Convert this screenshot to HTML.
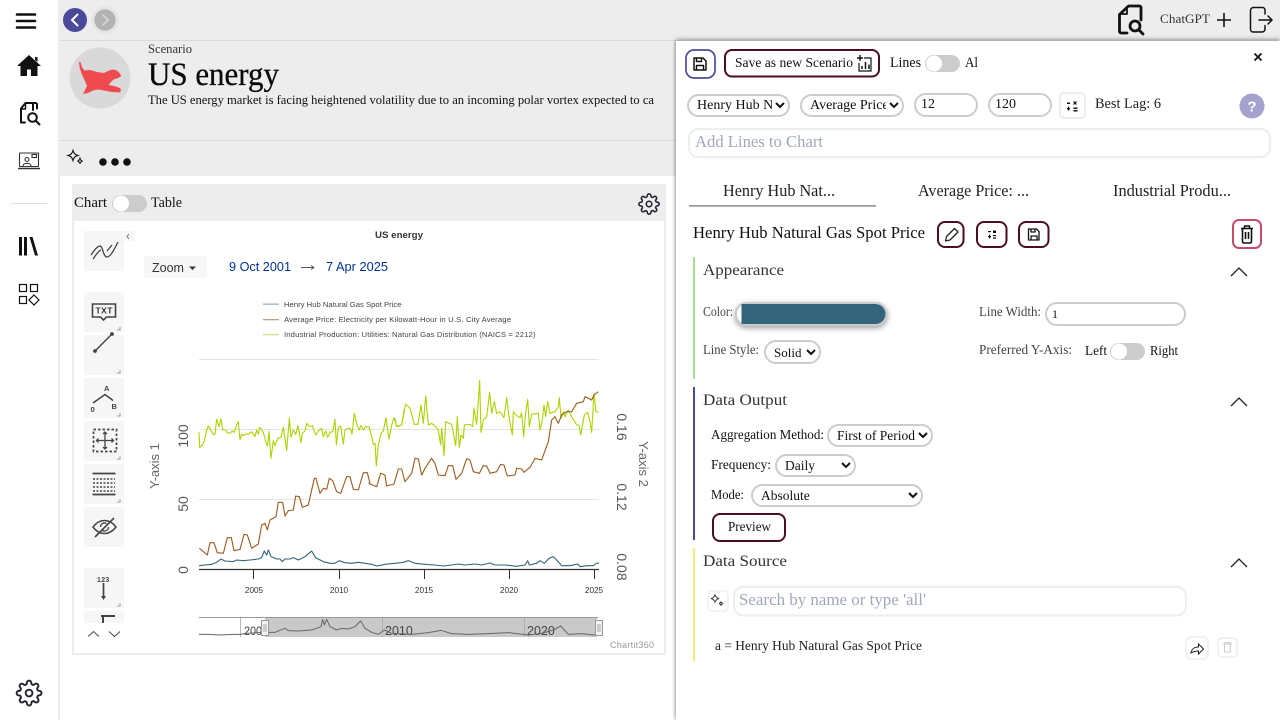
<!DOCTYPE html>
<html><head><meta charset="utf-8"><title>US energy</title>
<style>
html,body{margin:0;padding:0;width:1280px;height:720px;overflow:hidden;background:#fff;font-family:"Liberation Serif",serif;color:#111}
.a{position:absolute;box-sizing:border-box}
svg.main{position:absolute;left:0;top:0;z-index:2}
svg text{font-family:"Liberation Serif",serif;fill:#111}
svg text.s{font-family:"Liberation Sans",sans-serif}
.c{z-index:3;font-family:"Liberation Serif",serif;font-size:14px;color:#111;background:#fff;border:2px solid #ccc;border-radius:12px;padding:0 0 0 4px;outline:none;margin:0}
.tb{z-index:1;background:#f6f6f6}
.pl{fill:none;stroke-linejoin:round;vector-effect:non-scaling-stroke}
</style></head><body>
<div class="a" style="left:58px;top:0;width:1222px;height:40px;background:#ededed"></div>
<div class="a" style="left:58px;top:40px;width:622px;height:680px;background:#ededed"></div>
<div class="a" style="left:60px;top:40px;width:616px;height:1px;background:#d8d8d8"></div>
<div class="a" style="left:60px;top:140px;width:616px;height:1px;background:#d8d8d8"></div>
<div class="a" style="left:60px;top:176px;width:620px;height:544px;background:#fff"></div>
<div class="a" style="left:72px;top:184px;width:594px;height:471px;background:#ededed"></div>
<div class="a" style="left:74px;top:221px;width:590px;height:432px;background:#fff"></div>
<div class="a" style="left:676px;top:41px;width:604px;height:679px;background:#fff;box-shadow:0 -2px 4px rgba(0,0,0,.3),-1px 0 3px rgba(0,0,0,.22)"></div>

<div class="a tb" style="left:84px;top:231px;width:40px;height:40px"></div>
<div class="a tb" style="left:124px;top:231px;width:10px;height:10px"></div>
<div class="a tb" style="left:84px;top:292px;width:40px;height:40px"></div>
<div class="a tb" style="left:84px;top:335px;width:40px;height:40px"></div>
<div class="a tb" style="left:84px;top:378px;width:40px;height:40px"></div>
<div class="a tb" style="left:84px;top:421px;width:40px;height:40px"></div>
<div class="a tb" style="left:84px;top:464px;width:40px;height:40px"></div>
<div class="a tb" style="left:84px;top:507px;width:40px;height:40px"></div>
<div class="a tb" style="left:84px;top:568px;width:40px;height:40px"></div>
<div class="a tb" style="left:84px;top:611px;width:40px;height:12px"></div>
<div class="a tb" style="left:144px;top:256px;width:63px;height:22px;background:#f7f7f7"></div>

<svg class="main" width="1280" height="720" viewBox="0 0 1280 720">
<!-- Sidebar -->
<g fill="none" stroke="#111" stroke-width="2.600" stroke-linecap="round"><path d="M17 14.500h18M17 21h18M17 27.500h18"/></g>
<path d="M29 55 L17 66h3.500v10h6.500v-6.500h4V76h6.500V66H41z" fill="#111"/><path d="M35 57h2.500v5l-2.500-2z" fill="#111"/>
<g fill="none" stroke="#111" stroke-width="2" stroke-linecap="round" stroke-linejoin="round"><path d="M33 110v-7h-7.500l-4.500 5.500v14h4"/><path d="M25.500 103v6h-4.500" stroke-width="1.400"/><path d="M33 103h2.500a1.500 1.500 0 0 1 1.500 1.500v4"/><circle cx="32.500" cy="117.500" r="4.300"/><path d="M36 121l3.500 3.500"/></g>
<g fill="none" stroke="#333" stroke-width="1.100"><rect x="19.500" y="153" width="19" height="13.500" rx=".5"/><path d="M18 168.500h22" stroke-width="1.500"/><circle cx="27" cy="159.500" r="2"/><path d="M23 166c0-3.500 8-3.500 8 0"/><rect x="32" y="154.500" width="4.500" height="3"/></g>
<rect x="11" y="203" width="36" height="1" fill="#e0e0e0"/>
<g fill="#111"><rect x="19" y="237" width="3" height="18.500"/><rect x="24" y="237" width="3" height="18.500"/><path d="M29.500 237h3l5.500 18.500h-3z"/></g>
<g fill="none" stroke="#111" stroke-width="1.200"><rect x="19.500" y="284.500" width="7" height="7"/><rect x="30.500" y="284.500" width="7" height="7"/><rect x="19.500" y="296.500" width="7" height="7"/><path d="M34 295l5 5-5 5-5-5z"/></g>
<g transform="translate(15.500 679.500) scale(1.130)" fill="none" stroke="#223" stroke-width="1.700"><circle cx="12" cy="12" r="3"/><path d="M19.400 15a1.650 1.650 0 0 0 .33 1.820l.06.06a2 2 0 0 1 0 2.830 2 2 0 0 1-2.830 0l-.06-.06a1.650 1.650 0 0 0-1.820-.33 1.650 1.650 0 0 0-1 1.510V21a2 2 0 0 1-2 2 2 2 0 0 1-2-2v-.09A1.650 1.650 0 0 0 9 19.400a1.650 1.650 0 0 0-1.820.33l-.06.06a2 2 0 0 1-2.830 0 2 2 0 0 1 0-2.830l.06-.06a1.650 1.650 0 0 0 .33-1.820 1.650 1.650 0 0 0-1.510-1H3a2 2 0 0 1-2-2 2 2 0 0 1 2-2h.09A1.650 1.650 0 0 0 4.600 9a1.650 1.650 0 0 0-.33-1.820l-.06-.06a2 2 0 0 1 0-2.830 2 2 0 0 1 2.830 0l.06.06a1.650 1.650 0 0 0 1.820.33H9a1.650 1.650 0 0 0 1-1.510V3a2 2 0 0 1 2-2 2 2 0 0 1 2 2v.09a1.650 1.650 0 0 0 1 1.510 1.650 1.650 0 0 0 1.820-.33l.06-.06a2 2 0 0 1 2.830 0 2 2 0 0 1 0 2.830l-.06.06a1.650 1.650 0 0 0-.33 1.820V9a1.650 1.650 0 0 0 1.510 1H21a2 2 0 0 1 2 2 2 2 0 0 1-2 2h-.09a1.650 1.650 0 0 0-1.510 1z"/></g>

<!-- Top nav -->
<circle cx="75" cy="20" r="12" fill="#4a4a9a"/><path d="M77.500 14.500L72 20l5.500 5.500" fill="none" stroke="#fff" stroke-width="2" stroke-linecap="round"/>
<circle cx="105" cy="20" r="14" fill="#e6e6e6"/><circle cx="105" cy="20" r="10.700" fill="#b3b3b3"/><path d="M103 15l5 5-5 5" fill="none" stroke="#d5d5d5" stroke-width="1.600" stroke-linecap="round"/>
<g fill="none" stroke="#111" stroke-width="2.800" stroke-linecap="round" stroke-linejoin="round"><path d="M1141 20v-12.500a1.500 1.500 0 0 0-1.500-1.500h-11l-9 8.500v17a1.500 1.500 0 0 0 1.500 1.500h6"/><path d="M1127 7v7h-7" stroke-width="1.800"/><circle cx="1135" cy="26" r="5"/><path d="M1139 30l4 4"/></g>
<path d="M1224 13v14M1217 20h14" stroke="#111" stroke-width="1.600" fill="none"/>
<g fill="none" stroke="#111" stroke-width="1.500" stroke-linecap="round" stroke-linejoin="round"><path d="M1265 14V10a2.500 2.500 0 0 0-2.500-2.500h-9a3 3 0 0 0-3 3v19a2.500 2.500 0 0 0 2.500 2.500h9a3 3 0 0 0 3-3v-3.500"/><path d="M1259 20h13M1268 16l4 4-4 4"/></g>
<text x="1160" y="23" font-size="13" textLength="50" lengthAdjust="spacingAndGlyphs" style="fill:#333">ChatGPT</text>

<!-- Header -->
<circle cx="100" cy="78" r="30.500" fill="#d9d9d9"/>
<path d="M79 62L80.500 62L82 67L84.500 70.500L90 70L97 72L104 73L108 71L112 69.500L116 70L119 72.500L121.500 76L118 78L113.500 79.500L111 82L108.500 85L114 86L120 88L121 90L120 92.500L112 92L104 90.500L98 89.500L93 90.500L88 93L83 94L85 90L87 86L85 81L83 77L81 72L79.500 67Z" fill="#ef4a4f"/>
<text x="148" y="53" font-size="13" textLength="44" lengthAdjust="spacingAndGlyphs" style="fill:#333">Scenario</text>
<text x="148" y="85" font-size="33" textLength="131" lengthAdjust="spacingAndGlyphs" style="fill:#0a0a0a;stroke:#0a0a0a;stroke-width:.3">US energy</text>
<text x="148" y="104" font-size="12.500" textLength="506" lengthAdjust="spacingAndGlyphs">The US energy market is facing heightened volatility due to an incoming polar vortex expected to ca</text>
<g fill="none" stroke="#111" stroke-width="1.100"><path d="M73 150.500c.8 3 2 4.200 5 5-3 .8-4.200 2-5 5-.8-3-2-4.200-5-5 3-.8 4.200-2 5-5z"/><path d="M80 158.500c.4 1.500 1 2.200 2.600 2.600-1.600.4-2.200 1-2.600 2.600-.4-1.600-1-2.200-2.600-2.600 1.600-.4 2.200-1 2.600-2.600z"/></g>
<circle cx="103" cy="162" r="3.800" fill="#111"/><circle cx="115" cy="162" r="3.800" fill="#111"/><circle cx="127" cy="162" r="3.800" fill="#111"/>

<!-- Chart head -->
<text x="74" y="207" font-size="14.500" textLength="33" lengthAdjust="spacingAndGlyphs">Chart</text>
<rect x="112" y="195" width="35" height="17" rx="8.500" fill="#ccc"/><circle cx="121" cy="203.500" r="8" fill="#fff"/>
<text x="151" y="207" font-size="14.500" textLength="31" lengthAdjust="spacingAndGlyphs">Table</text>
<g transform="translate(638 193) scale(.92)" fill="none" stroke="#223" stroke-width="1.700"><circle cx="12" cy="12" r="3"/><path d="M19.400 15a1.650 1.650 0 0 0 .33 1.820l.06.06a2 2 0 0 1 0 2.830 2 2 0 0 1-2.830 0l-.06-.06a1.650 1.650 0 0 0-1.820-.33 1.650 1.650 0 0 0-1 1.510V21a2 2 0 0 1-2 2 2 2 0 0 1-2-2v-.09A1.650 1.650 0 0 0 9 19.400a1.650 1.650 0 0 0-1.820.33l-.06.06a2 2 0 0 1-2.830 0 2 2 0 0 1 0-2.830l.06-.06a1.650 1.650 0 0 0 .33-1.820 1.650 1.650 0 0 0-1.510-1H3a2 2 0 0 1-2-2 2 2 0 0 1 2-2h.09A1.650 1.650 0 0 0 4.600 9a1.650 1.650 0 0 0-.33-1.820l-.06-.06a2 2 0 0 1 0-2.830 2 2 0 0 1 2.830 0l.06.06a1.650 1.650 0 0 0 1.820.33H9a1.650 1.650 0 0 0 1-1.510V3a2 2 0 0 1 2-2 2 2 0 0 1 2 2v.09a1.650 1.650 0 0 0 1 1.510 1.650 1.650 0 0 0 1.820-.33l.06-.06a2 2 0 0 1 2.830 0 2 2 0 0 1 0 2.830l-.06.06a1.650 1.650 0 0 0-.33 1.820V9a1.650 1.650 0 0 0 1.510 1H21a2 2 0 0 1 2 2 2 2 0 0 1-2 2h-.09a1.650 1.650 0 0 0-1.510 1z"/></g>

<!-- Tool icons -->
<path d="M129 234l-2 2.500 2 2.500" fill="none" stroke="#777" stroke-width="1"/>
<g fill="none" stroke="#444" stroke-width="1.300">
<path d="M91 255c3-4 6-9 9-9 3 0 3 11 7 11 3 0 6-5 11-15M93 259c3-4 5-8 8-9M107 251l5-6"/>
<path d="M92.500 304h23v13h-9l-3 3-3-3h-8z" stroke-width="1.600"/>
<path d="M95 351l17-17" stroke-width="1.400"/>
<path d="M93 403l12-8.500 8 6" stroke-width="1.500"/>
<rect x="93.500" y="429.500" width="23" height="22" stroke-dasharray="2.500 2" stroke-width="1.700"/><path d="M105 432v17M96.500 440.500h17M103 434l2-2 2 2M103 447l2 2 2-2M98.500 438.500l-2 2 2 2M111.500 438.500l2 2-2 2"/>
<path d="M92.500 473.500h23M92.500 494.500h23" stroke-width="1.700"/><path d="M93 479h22M93 483h22M93 487h22M93 491h22" stroke-dasharray="2 1.500" stroke-width="1.400"/>
<path d="M93 527c3-4 7-6.500 11.500-6.500s8.500 2.500 11.500 6.500c-3 4-7 6.500-11.500 6.500S96 531 93 527z" stroke-width="1.500"/><path d="M100.500 527a4 4 0 0 1 6-3.500M108.500 527a4 4 0 0 1-6 3.500"/><path d="M95 537l19-19" stroke-width="1.600"/>
<path d="M103.500 583v14" stroke-width="1.700"/>
<path d="M101 616h14M103 616v7" stroke-width="2"/>
</g>
<circle cx="95" cy="351" r="1.900" fill="#444"/><circle cx="112" cy="334" r="1.900" fill="#444"/>
<path d="M101 596h5l-2.500 4z" fill="#444"/>
<text class="s" x="97" y="582" font-size="7" font-weight="bold" style="fill:#444;letter-spacing:.3px">123</text>
<text class="s" x="95.500" y="313.500" font-size="8.500" font-weight="bold" textLength="17" lengthAdjust="spacing" style="fill:#333">TXT</text>
<text class="s" x="104" y="391" font-size="7.500" font-weight="bold" style="fill:#444">A</text><text class="s" x="90.500" y="412" font-size="7.500" font-weight="bold" style="fill:#444">0</text><text class="s" x="111.500" y="409" font-size="7.500" font-weight="bold" style="fill:#444">B</text>
<g fill="none" stroke="#888" stroke-width=".8"><path d="M117 330h3v-3M117 373h3v-3M117 416h3v-3M117 459h3v-3M117 502h3v-3M117 606h3v-3"/></g>
<path d="M88 636.500l5.500-5 5.500 5M109 631.500l5.500 5 5.500-5" fill="none" stroke="#444" stroke-width="1"/>

<!-- Chart text -->
<text class="s" x="375" y="238" font-size="9.500" font-weight="bold" textLength="48" lengthAdjust="spacingAndGlyphs" style="fill:#333">US energy</text>
<text class="s" x="152" y="272" font-size="12.500" style="fill:#333">Zoom</text><path d="M189 266.500h7l-3.500 3.500z" fill="#333"/>
<text class="s" x="229" y="271" font-size="12.500" textLength="62" lengthAdjust="spacingAndGlyphs" style="fill:#003399">9 Oct 2001</text>
<text class="s" x="326" y="271" font-size="12.500" textLength="62" lengthAdjust="spacingAndGlyphs" style="fill:#003399">7 Apr 2025</text>
<path d="M301 267.500h13M311 265.500l3 2-3 2" fill="none" stroke="#555" stroke-width=".9"/>
<rect x="263" y="303.500" width="16" height="1.300" fill="#9ab0bc"/><rect x="263" y="319" width="16" height="1.300" fill="#c2a17f"/><rect x="263" y="334" width="16" height="1.300" fill="#cfe58c"/>
<g font-size="7.700"><text class="s" x="284" y="307" style="fill:#444">Henry Hub Natural Gas Spot Price</text>
<text class="s" x="284" y="322" textLength="227" lengthAdjust="spacing" style="fill:#444">Average Price: Electricity per Kilowatt-Hour in U.S. City Average</text>
<text class="s" x="284" y="337" textLength="251.500" lengthAdjust="spacing" style="fill:#444">Industrial Production: Utilities: Natural Gas Distribution (NAICS = 2212)</text></g>

<path d="M199 359.500h400M199 429.500h400M199 499.500h400" stroke="#e3e3e3" stroke-width="1" fill="none"/>
<path d="M199 569.500h400" stroke="#333" stroke-width="1.300"/>
<path d="M253.500 570v9M339.500 570v9M424.500 570v9M509.500 570v9M594.500 570v9" stroke="#333" stroke-width="1"/>
<g font-size="8.200" text-anchor="middle"><text class="s" x="254" y="593" style="fill:#333">2005</text><text class="s" x="339" y="593" style="fill:#333">2010</text><text class="s" x="424" y="593" style="fill:#333">2015</text><text class="s" x="509" y="593" style="fill:#333">2020</text><text class="s" x="594" y="593" style="fill:#333">2025</text></g>
<g font-size="14" text-anchor="middle" fill="#555">
<text class="s" transform="translate(188 570) rotate(-90)" style="fill:#555">0</text>
<text class="s" transform="translate(188 504) rotate(-90)" style="fill:#555">50</text>
<text class="s" transform="translate(188 436) rotate(-90)" style="fill:#555">100</text>
<text class="s" transform="translate(159 466) rotate(-90)" font-size="13" style="fill:#666">Y-axis 1</text>
<text class="s" transform="translate(617 427) rotate(90)" style="fill:#555">0.16</text>
<text class="s" transform="translate(617 497) rotate(90)" style="fill:#555">0.12</text>
<text class="s" transform="translate(617 567) rotate(90)" style="fill:#555">0.08</text>
<text class="s" transform="translate(639 464) rotate(90)" font-size="13" style="fill:#666">Y-axis 2</text>
</g>

<!-- Series -->
<g transform="translate(195 375) scale(.33333)"><polyline class="pl" stroke="#aad400" stroke-width="1.100" points="12,172 14,218 22,210 28,198 35,165 40,153 47,165 55,178 60,178 65,132 72,155 78,132 83,165 92,165 97,173 105,175 112,168 118,172 125,150 130,140 135,195 140,178 145,182 152,177 160,178 170,170 180,185 185,165 190,178 194,157 205,172 215,210 218,212 222,170 228,250 235,197 240,212 248,190 258,187 265,157 275,227 283,130 288,187 295,165 302,178 309,152 318,203 322,175 330,168 335,145 345,155 352,152 362,180 370,168 380,160 385,185 392,168 398,187 405,172 413,170 420,133 424,210 430,158 437,153 445,207 450,165 460,160 466,160 471,178 478,115 485,147 492,165 498,152 505,165 512,155 522,155 530,185 535,208 540,205 544,272 550,210 558,175 565,168 573,128 582,192 590,150 597,128 605,153 620,150 628,100"/></g>
<g transform="translate(395 375) scale(.33333)"><polyline class="pl" stroke="#aad400" stroke-width="1.100" points="0,130 5,155 20,150 32,87 45,100 58,148 68,148 72,130 78,90 85,145 92,62 100,150 110,145 122,155 130,165 137,210 140,160 147,242 152,140 170,148 182,212 187,125 193,218 198,180 205,190 208,150 225,148 233,155 237,100 245,148 254,17 258,172 265,135 275,125 284,52 290,115 298,80 305,115 315,110 327,128 335,68 342,125 347,155 352,180 355,110 365,122 375,128 380,113 386,185 392,113 398,73 403,155 410,118 430,115 435,165 442,135 447,90 452,125 458,80 465,115 480,110 490,95 493,68 498,130 505,110 510,125 520,105 530,125 545,150 552,150 557,180 563,148 568,120 578,112 585,140 590,172 597,55 603,110 610,112"/></g>
<g transform="translate(70 420) scale(.33333)"><polyline class="pl" stroke="#9c5a1c" stroke-width="1.100" points="388,385 412,405 420,368 432,368 442,398 460,400 472,353 484,353 492,392 510,388 522,343 532,345 545,385 565,372 575,315 585,310 592,330 600,300 618,290 625,247 638,247 645,288 655,272 670,270 677,228 688,230 697,262 715,255 733,175 738,175 750,220 760,205 770,208 778,175 788,182 800,215 812,220 830,170 840,170 850,208 865,210 880,158 892,158 900,190"/></g>
<g transform="translate(370 360) scale(.33333)"><polyline class="pl" stroke="#9c5a1c" stroke-width="1.100" points="-4,368 0,372 20,380 32,340 45,345 50,378 72,372 85,327 95,327 105,365 125,340 135,295 145,297 155,345 165,325 185,295 195,310 205,345 225,347 235,317 248,317 258,358 275,340 290,296 300,300 310,335 328,340 340,317 350,318 360,340 380,335 392,313 402,315 412,348 435,345 440,325 455,327 462,337 480,322 495,295 515,300 535,245 545,180 555,170 565,190 575,165 590,155 605,155 620,130 640,125 645,110 665,120 672,105 685,95"/></g>
<g transform="translate(195 545) scale(.33333)"><polyline class="pl" stroke="#34647c" stroke-width="1.100" points="12,62 30,60 50,58 65,52 78,42 90,48 115,50 125,45 145,47 165,45 190,42 200,38 208,18 215,30 220,15 228,35 245,42 255,42 262,50 270,42 285,42 295,38 310,45 330,35 350,18 362,38 385,50 405,55 420,55 432,47 450,53 470,55 490,52 510,55 530,58 545,63 570,58 600,55 625,52 640,47 660,55 690,58 720,60 745,63 770,60 790,57 810,60 840,57 860,60 885,54 900,60 930,60 965,64 990,60 998,47 1003,60 1025,55 1035,47 1048,55 1062,40 1075,35 1085,45 1100,62 1125,62 1148,57 1155,65 1175,62 1195,62 1205,54 1212,55"/></g>

<!-- Navigator -->
<rect x="265" y="617" width="332" height="20" fill="#c9c9c9"/>
<path d="M199 617.500h399" stroke="#999" stroke-width="1"/>
<path d="M240.500 618v19M382.500 618v19M524.500 618v19" stroke="#aaa" stroke-width=".8"/>
<text class="s" x="244" y="635" font-size="12" textLength="18" lengthAdjust="spacingAndGlyphs" style="fill:#444">200</text>
<text class="s" x="385" y="635" font-size="12.500" style="fill:#444">2010</text>
<text class="s" x="527" y="635" font-size="12.500" style="fill:#444">2020</text>
<g transform="translate(195 545) scale(.33333)"><polyline class="pl" stroke="#666" stroke-width="1" points="12,268 40,268 75,270 115,268 137,268 150,265 210,262 240,262 270,250 280,257 310,258 350,255 378,245 383,223 388,240 395,223 405,245 425,255 440,250 460,252 480,245 497,228 510,250 530,262 550,268 568,255 590,265 650,268 700,263 738,256 770,266 820,268 880,266 940,263 1000,270 1040,265 1075,255 1097,243 1120,268 1160,266 1195,270 1210,265"/></g>
<rect x="261.500" y="620.500" width="7" height="15" fill="#f2f2f2" stroke="#999"/><path d="M264 624v8M266 624v8" stroke="#888" stroke-width=".7"/>
<rect x="595.500" y="620.500" width="7" height="15" fill="#f2f2f2" stroke="#999"/><path d="M598 624v8M600 624v8" stroke="#888" stroke-width=".7"/>
<text class="s" x="610" y="648" font-size="9" textLength="44" lengthAdjust="spacing" style="fill:#999">Chartit360</text>

<!-- Panel top -->
<rect x="686" y="50" width="29" height="28" rx="8" fill="#fff" stroke="#4a4a9a" stroke-width="1.700"/>
<g fill="none" stroke="#111" stroke-width="1.500" stroke-linejoin="round"><path d="M694 58h9l3 3v9h-12z"/><path d="M696.500 58v3.500h5V58M696.500 70v-4.500h7V70"/></g>
<rect x="725" y="50" width="154" height="26.500" rx="7" fill="#fff" stroke="#4a0d25" stroke-width="2"/>
<text x="735" y="67" font-size="13.500" textLength="118" lengthAdjust="spacingAndGlyphs">Save as new Scenario</text>
<g fill="none" stroke="#111" stroke-width="1.200"><path d="M864 58h7v13h-12v-8"/><path d="M862 66v3M865.500 62v7M869 64.500v4.500" stroke-width="1.500"/><path d="M860 55v6M857 58h6" stroke-width="1.400"/></g>
<text x="890" y="67" font-size="14.500" textLength="31" lengthAdjust="spacingAndGlyphs">Lines</text>
<rect x="925" y="55" width="35" height="17" rx="8.500" fill="#ccc"/><circle cx="934" cy="63.500" r="8" fill="#fff"/>
<text x="965" y="67" font-size="14.500" textLength="13" lengthAdjust="spacingAndGlyphs">Al</text>
<path d="M1254.500 53.500l7 7M1261.500 53.500l-7 7" stroke="#111" stroke-width="1.800"/>

<rect x="1060" y="93" width="25" height="25" rx="4" fill="#fff" stroke="#eee" stroke-width="2"/>
<g fill="#111"><path d="M1067 102.500h3v1.500h-3zM1067 108h3v1.500h-3zM1073.500 107.500h4v1.500h-4zM1073.500 110h4v1.500h-4z"/><path d="M1073.500 101.500l3 3M1076.500 101.500l-3 3" stroke="#111" stroke-width="1.200"/><path d="M1068.500 106.500v4" stroke="#111" stroke-width="1.200"/></g>
<text x="1095" y="108" font-size="14.500" textLength="66" lengthAdjust="spacingAndGlyphs" style="fill:#222">Best Lag: 6</text>
<circle cx="1252" cy="106" r="12.500" fill="#a5a2d0"/><text class="s" x="1252" y="111.500" font-size="15" font-weight="bold" text-anchor="middle" style="fill:#fff">?</text>

<rect x="689" y="129" width="581" height="28" rx="9" fill="#fff" stroke="#eee" stroke-width="2"/>
<text x="695" y="147" font-size="17" textLength="128" lengthAdjust="spacingAndGlyphs" style="fill:#a0a8b8">Add Lines to Chart</text>

<text x="723" y="196" font-size="16.500" textLength="112" lengthAdjust="spacingAndGlyphs" style="fill:#222">Henry Hub Nat...</text>
<rect x="689" y="205" width="187" height="1.700" fill="#999"/>
<text x="918" y="196" font-size="16.500" textLength="111" lengthAdjust="spacingAndGlyphs" style="fill:#222">Average Price: ...</text>
<text x="1113" y="196" font-size="16.500" textLength="118" lengthAdjust="spacingAndGlyphs" style="fill:#222">Industrial Produ...</text>

<text x="693" y="238" font-size="17" textLength="232" lengthAdjust="spacingAndGlyphs">Henry Hub Natural Gas Spot Price</text>
<rect x="938" y="222" width="25.500" height="25" rx="7" fill="#fff" stroke="#4a0d25" stroke-width="2"/>
<g fill="none" stroke="#222" stroke-width="1.300" stroke-linejoin="round"><path d="M945.500 241l1-4.500 8-8 3.500 3.500-8 8z"/></g>
<rect x="977" y="222" width="29.500" height="25" rx="7" fill="#fff" stroke="#4a0d25" stroke-width="2"/>
<g fill="#111"><rect x="988" y="231" width="3" height="1.200"/><rect x="988" y="236" width="3" height="1.200"/><rect x="993" y="235" width="3" height="1.200"/><rect x="993" y="237.500" width="3" height="1.200"/><rect x="993" y="230.500" width="3" height="2.500"/><rect x="989" y="234.500" width="1.200" height="4"/></g>
<rect x="1019" y="222" width="29.500" height="25" rx="7" fill="#fff" stroke="#4a0d25" stroke-width="2"/>
<g fill="none" stroke="#111" stroke-width="1.300" stroke-linejoin="round"><path d="M1028.500 229h8l2.500 2.500V240h-10.500z"/><path d="M1031 229v3h4v-3M1031 240v-4h6v4"/></g>
<rect x="1233" y="220" width="28" height="28" rx="6" fill="#fff" stroke="#c84b6e" stroke-width="2"/>
<g fill="none" stroke="#111" stroke-width="1.600" stroke-linejoin="round"><path d="M1241 228.500h12M1244.500 228.500v-2.500h5v2.500M1242.500 228.500v13a1.500 1.500 0 0 0 1.500 1.500h6a1.500 1.500 0 0 0 1.500-1.500v-13M1245.500 232v7M1248.500 232v7"/></g>

<!-- Appearance -->
<rect x="693" y="257" width="2" height="122" fill="#a8dc94"/>
<text x="703" y="275" font-size="16" textLength="81" lengthAdjust="spacingAndGlyphs" style="fill:#333">Appearance</text>
<path d="M1231 276l8-8 8 8M1231 406l8-8 8 8M1231 567l8-8 8 8" fill="none" stroke="#222" stroke-width="1.300"/>
<text x="703" y="316" font-size="13.500" textLength="30" lengthAdjust="spacingAndGlyphs" style="fill:#444">Color:</text>
<rect x="736" y="303" width="150.500" height="22" rx="11" fill="#fff" stroke="#ccc" stroke-width="2" style="filter:drop-shadow(0 2px 3px rgba(0,0,0,.4))"/>
<path d="M741.500 304h134a10 10 0 0 1 0 20h-134z" fill="#34647c"/>
<text x="979" y="316" font-size="13.500" textLength="62" lengthAdjust="spacingAndGlyphs" style="fill:#444">Line Width:</text>
<text x="703" y="354" font-size="13.500" textLength="56" lengthAdjust="spacingAndGlyphs" style="fill:#444">Line Style:</text>
<text x="979" y="354" font-size="13.500" textLength="93" lengthAdjust="spacingAndGlyphs" style="fill:#444">Preferred Y-Axis:</text>
<text x="1085" y="355" font-size="13.500" textLength="22" lengthAdjust="spacingAndGlyphs">Left</text>
<rect x="1110" y="343" width="35" height="17" rx="8.500" fill="#ccc"/><circle cx="1119" cy="351.500" r="8" fill="#fff"/>
<text x="1150" y="355" font-size="13.500" textLength="28" lengthAdjust="spacingAndGlyphs">Right</text>

<!-- Data output -->
<rect x="693" y="387" width="2" height="153" fill="#4a4a9a"/>
<text x="703" y="405" font-size="16" textLength="84" lengthAdjust="spacingAndGlyphs" style="fill:#333">Data Output</text>
<text x="711" y="439" font-size="13.500" textLength="113" lengthAdjust="spacingAndGlyphs">Aggregation Method:</text>
<text x="711" y="469" font-size="13.500" textLength="60" lengthAdjust="spacingAndGlyphs">Frequency:</text>
<text x="711" y="499" font-size="13.500" textLength="33" lengthAdjust="spacingAndGlyphs">Mode:</text>
<rect x="713" y="514" width="72" height="27" rx="7" fill="#fff" stroke="#4a0d25" stroke-width="2"/>
<text x="728" y="531" font-size="13.500" textLength="43" lengthAdjust="spacingAndGlyphs">Preview</text>

<!-- Data source -->
<rect x="693" y="548" width="2" height="113" fill="#f5ee75"/>
<text x="703" y="566" font-size="16" textLength="84" lengthAdjust="spacingAndGlyphs" style="fill:#333">Data Source</text>
<rect x="708" y="591" width="20" height="20" rx="4" fill="#fff" stroke="#f0f0f0" stroke-width="1.500"/>
<g fill="none" stroke="#333" stroke-width=".9"><path d="M715 594.500c.6 2.500 1.600 3.500 4 4-2.400.5-3.400 1.500-4 4-.6-2.500-1.600-3.500-4-4 2.400-.5 3.400-1.500 4-4z"/><path d="M721 601.500c.3 1.300.8 1.800 2 2.100-1.200.3-1.700.8-2 2.100-.3-1.300-.8-1.800-2-2.100 1.200-.3 1.700-.8 2-2.100z"/></g>
<rect x="734" y="587" width="452" height="28.500" rx="9" fill="#fff" stroke="#eee" stroke-width="2"/>
<text x="739" y="605" font-size="17" textLength="187" lengthAdjust="spacingAndGlyphs" style="fill:#a0a8b8">Search by name or type 'all'</text>
<text x="715" y="650" font-size="13.500" textLength="207" lengthAdjust="spacingAndGlyphs" style="fill:#222">a = Henry Hub Natural Gas Spot Price</text>
<rect x="1186" y="637" width="22" height="22" rx="5" fill="#fff" stroke="#eee" stroke-width="1.500"/>
<path d="M1191 653c.5-4 3.500-6 7.500-6v-3l5 5-5 5v-3c-3 0-5 .5-7.500 2z" fill="none" stroke="#222" stroke-width="1"/>
<rect x="1218" y="638" width="19" height="19" rx="4" fill="#fff" stroke="#eee" stroke-width="1.500"/>
<g fill="none" stroke="#ccc" stroke-width="1"><path d="M1223 644h9M1225 644v-1.500h5v1.500M1224.500 644v8h6v-8"/></g>
</svg>

<select class="a c" style="left:687px;top:94px;width:103px;height:23px"><option>Henry Hub Natural Gas Spot Price</option></select>
<select class="a c" style="left:800px;top:94px;width:104px;height:23px"><option>Average Price: Electricity</option></select>
<input class="a c" style="left:914px;top:93px;width:64px;height:24px;padding-left:5px" value="12">
<input class="a c" style="left:988px;top:93px;width:64px;height:24px;padding-left:5px" value="120">
<input class="a c" style="left:1045px;top:302px;width:141px;height:24px;padding-left:5px;font-size:12px" value="1">
<select class="a c" style="left:764px;top:340px;width:57px;height:24px;font-size:13px;padding-left:4px"><option>Solid</option></select>
<select class="a c" style="left:827px;top:424px;width:106px;height:23px;font-size:13.500px;padding-left:4px"><option>First of Period</option></select>
<select class="a c" style="left:775px;top:454px;width:81px;height:23px;font-size:13.500px;padding-left:4px"><option>Daily</option></select>
<select class="a c" style="left:751px;top:484px;width:172px;height:23px;font-size:13.500px;padding-left:4px"><option>Absolute</option></select>
</body></html>
